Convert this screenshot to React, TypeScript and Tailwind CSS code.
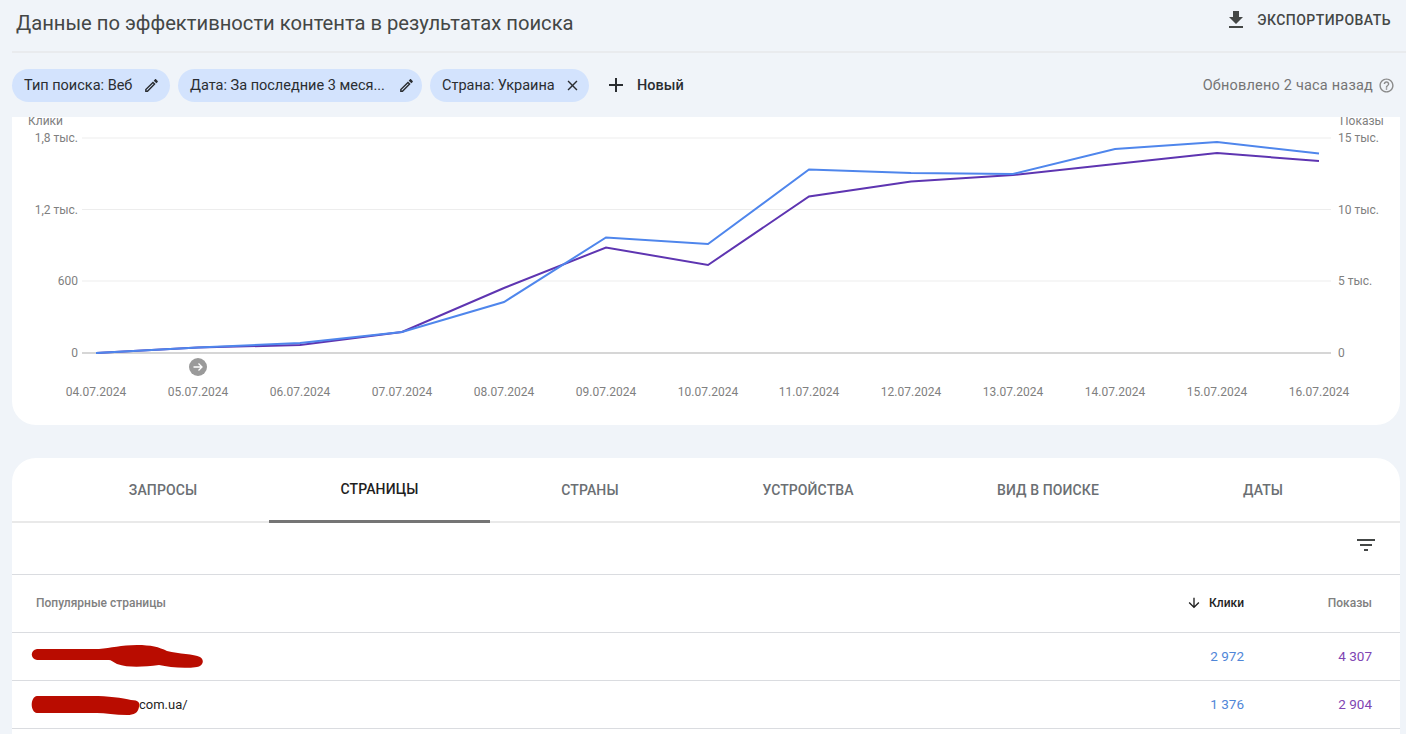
const ICONS = {
  download: "M19 9h-4V3H9v6H5l7 7 7-7zM5 18v2h14v-2H5z",
  edit: "M3 17.25V21h3.75L17.81 9.94l-3.75-3.75L3 17.25zM5.92 19H5v-.92l9.06-9.06.92.92L5.92 19zM20.71 7.04c.39-.39.39-1.02 0-1.41l-2.34-2.34c-.39-.39-1.02-.39-1.41 0l-1.83 1.83 3.75 3.75 1.83-1.83z",
  close: "M19 6.41L17.59 5 12 10.59 6.41 5 5 6.41 10.59 12 5 17.59 6.41 19 12 13.41 17.59 19 19 17.59 13.41 12z",
  add: "M19 13h-6v6h-2v-6H5v-2h6V5h2v6h6v2z",
  filter: "M10 18h4v-2h-4v2zM3 6v2h18V6H3zm3 7h12v-2H6v2z",
  help: "M11 18h2v-2h-2v2zm1-16C6.48 2 2 6.48 2 12s4.48 10 10 10 10-4.48 10-10S17.52 2 12 2zm0 18c-4.41 0-8-3.59-8-8s3.59-8 8-8 8 3.59 8 8-3.59 8-8 8zm0-14c-2.21 0-4 1.79-4 4h2c0-1.1.9-2 2-2s2 .9 2 2c0 2-3 1.75-3 5h2c0-2.25 3-2.5 3-5 0-2.21-1.79-4-4-4z",
  down: "M20 12l-1.41-1.41L13 16.17V4h-2v12.17l-5.58-5.59L4 12l8 8 8-8z",
};

function Icon(props: { d: string; className: string }) {
  return (
    <svg viewBox="0 0 24 24" fill="currentColor" fillRule="evenodd" className={props.className}>
      <path d={props.d} />
    </svg>
  );
}

const TABS = [
  { label: "ЗАПРОСЫ", className: "w-[212px] text-[#6b6f73]" },
  { label: "СТРАНИЦЫ", className: "w-[221px] text-[#1f1f1f] border-b-[3px] border-[#757575]" },
  { label: "СТРАНЫ", className: "w-[200px] text-[#6b6f73]" },
  { label: "УСТРОЙСТВА", className: "w-[236px] text-[#6b6f73]" },
  { label: "ВИД В ПОИСКЕ", className: "w-[244px] text-[#6b6f73]" },
  { label: "ДАТЫ", className: "w-[186px] text-[#6b6f73]" },
];

const DATES = [
  "04.07.2024", "05.07.2024", "06.07.2024", "07.07.2024", "08.07.2024", "09.07.2024", "10.07.2024",
  "11.07.2024", "12.07.2024", "13.07.2024", "14.07.2024", "15.07.2024", "16.07.2024",
];
const DATE_X = [96, 198, 300, 402, 504, 606, 708, 809, 911, 1013, 1115, 1217, 1319];

const GRID = [
  { y: 138, left: "1,8 тыс.", right: "15 тыс." },
  { y: 209.5, left: "1,2 тыс.", right: "10 тыс." },
  { y: 281, left: "600", right: "5 тыс." },
  { y: 353, left: "0", right: "0" },
];

const CLICKS = "96,353 198,347.5 300,343 402,332 504,302 606,237.5 708,244 809,169.5 911,173 1013,174 1115,149 1217,142 1319,153.5";
const VIEWS = "96,353 198,347.5 300,345 402,332 504,288 606,247.5 708,265 809,196.5 911,181.5 1013,175 1115,164 1217,153 1319,161";

function Chart() {
  return (
    <svg viewBox="12 117 1388 285" className="block h-[285px] w-[1388px]" fontFamily="Roboto, sans-serif" fontSize="12" fill="#808080">
      <text x="28" y="125">Клики</text>
      <text x="1340" y="125">Показы</text>
      {GRID.map((line) => (
        <g key={line.y}>
          <line
            x1="82"
            x2="1331"
            y1={line.y}
            y2={line.y}
            stroke={line.y === 353 ? "#c8c8c8" : "#ededed"}
            strokeWidth={line.y === 353 ? 1.5 : 1}
          />
          <text x="78" y={line.y + 4} textAnchor="end">{line.left}</text>
          <text x="1338" y={line.y + 4}>{line.right}</text>
        </g>
      ))}
      <polyline points={VIEWS} fill="none" stroke="#5e35b1" strokeWidth="2" />
      <polyline points={CLICKS} fill="none" stroke="#4f86ec" strokeWidth="2" />
      <circle cx="198" cy="367" r="9" fill="#9a9a9a" />
      <path d="M193.5 367h8M198.5 363.5l3.5 3.5-3.5 3.5" fill="none" stroke="#fff" strokeWidth="1.3" />
      {DATES.map((date, i) => (
        <text key={date} x={DATE_X[i]} y="396" textAnchor="middle">{date}</text>
      ))}
    </svg>
  );
}

function Chip(props: { label: string; icon: string; className: string }) {
  return (
    <div className={"flex h-[33px] items-center justify-between rounded-full bg-[#d3e3fd] pl-3 text-[14.5px] text-[#2a2d31] " + props.className}>
      <span className="pt-[2px]">{props.label}</span>
      <Icon d={props.icon} className="h-[17px] w-[17px]" />
    </div>
  );
}

export default function App() {
  return (
    <div className="h-[734px] w-[1406px] overflow-hidden bg-[#f0f4f9] font-['Roboto',sans-serif]">
      <header className="ml-3 flex h-[53px] items-start justify-between border-b-2 border-[#e9ebee] pl-1 pr-[15px]">
        <h1 className="text-[20.2px] leading-[46px] text-[#444746]">Данные по эффективности контента в результатах поиска</h1>
        <button className="mt-2 flex items-center gap-[9px] text-[14px] font-medium tracking-[0.45px] text-[#444746]">
          <Icon d={ICONS.download} className="h-[24px] w-[24px]" />
          ЭКСПОРТИРОВАТЬ
        </button>
      </header>

      <div className="flex h-[64px] items-center gap-2 pl-3 pr-[11px]">
        <Chip label="Тип поиска: Веб" icon={ICONS.edit} className="w-[158px] pr-[10px]" />
        <Chip label="Дата: За последние 3 меся..." icon={ICONS.edit} className="w-[244px] pr-[7px]" />
        <Chip label="Страна: Украина" icon={ICONS.close} className="w-[159px] pr-2" />
        <button className="ml-[7px] flex items-center gap-[9px] text-[14.5px] font-medium text-[#2a2d31]">
          <Icon d={ICONS.add} className="h-[24px] w-[24px]" />
          <span className="pt-[2px]">Новый</span>
        </button>
        <div className="ml-auto flex items-center gap-[5px] text-[14.5px] tracking-[0.2px] text-[#757575]">
          <span className="pt-[2px]">Обновлено 2 часа назад</span>
          <Icon d={ICONS.help} className="h-[17px] w-[17px] text-[#8a8a8a]" />
        </div>
      </div>

      <section className="mx-3 h-[308px] w-[1388px] overflow-hidden rounded-b-[24px] bg-white">
        <Chart />
      </section>

      <section className="relative mx-3 mt-[33px] h-[300px] w-[1388px] rounded-t-[24px] bg-white">
        <nav className="flex h-[65px] border-b-2 border-[#e9e9e9] pl-[45px]">
          {TABS.map((tab) => (
            <div key={tab.label} className={"flex h-[65px] items-center justify-center text-[14px] font-medium tracking-[0.1px] " + tab.className}>
              {tab.label}
            </div>
          ))}
        </nav>
        <div className="flex h-[52px] items-start justify-end border-b border-[#dadce0] pr-[22px] pt-[10px]">
          <Icon d={ICONS.filter} className="h-[24px] w-[24px] text-[#444746]" />
        </div>
        <div className="flex h-[58px] items-center border-b border-[#dadce0] pb-[2px] pl-6 pr-7 text-[12px] font-medium text-[#808080]">
          <span className="flex-1">Популярные страницы</span>
          <span className="flex w-[76px] items-center justify-end gap-[7px] text-[#1f1f1f]">
            <Icon d={ICONS.down} className="h-[16px] w-[16px]" />
            Клики
          </span>
          <span className="w-[128px] text-right">Показы</span>
        </div>
        <div className="relative flex h-[48px] items-center border-b border-[#dadce0] pl-6 pr-7 text-[13.5px] text-[#1f1f1f]">
          <span className="flex-1" />
          <span className="w-[76px] text-right text-[#4f86d8]">2 972</span>
          <span className="w-[128px] text-right text-[#7f45b3]">4 307</span>
          <svg viewBox="0 0 180 28" className="absolute left-[18px] top-[9px] h-[28px] w-[180px]">
            <path d="M7 7h62c12-1 22-4 38-4 14 0 22 2 30 6 12 3 27 3 33 6 5 3 3 9-3 10-14 2-28 0-38-2-16 2-30 3-42-1-4-2-6-4-8-4H7c-7-1-7-10 0-11z" fill="#b90c00" />
          </svg>
        </div>
        <div className="relative flex h-[48px] items-center border-b border-[#dadce0] pl-6 pr-7 text-[13.5px] text-[#1f1f1f]">
          <span className="flex-1 pl-[103px] text-[13px]">com.ua/</span>
          <span className="w-[76px] text-right text-[#4f86d8]">1 376</span>
          <span className="w-[128px] text-right text-[#7f45b3]">2 904</span>
          <svg viewBox="0 0 112 24" className="absolute left-[18px] top-[12px] h-[24px] w-[112px]">
            <path d="M7 3h56c14 0 30 2 38 4 8 0 9 3 8 7-1 6-5 8-12 8-12 0-22-2-30-2H7c-7-1-7-16 0-17z" fill="#b90c00" />
          </svg>
        </div>
      </section>
    </div>
  );
}
